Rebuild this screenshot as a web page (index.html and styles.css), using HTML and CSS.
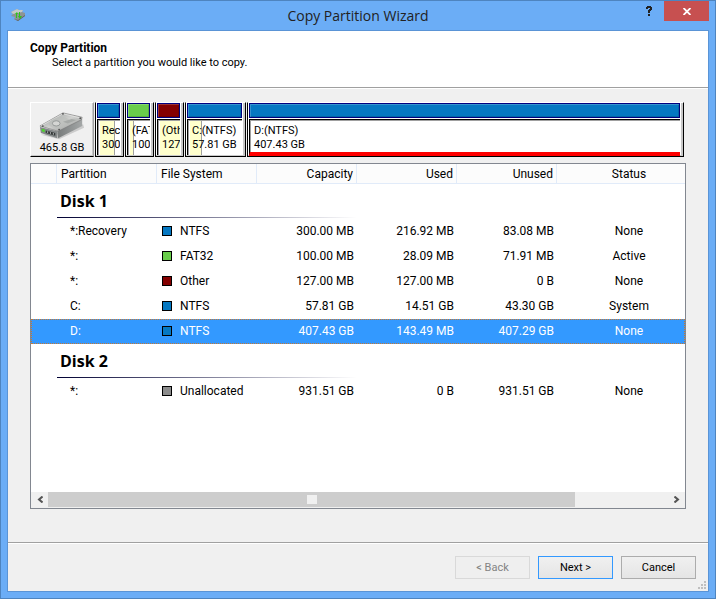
FILE: index.html
```html
<!DOCTYPE html>
<html lang="en">
<head>
    <meta charset="UTF-8">
    <meta name="viewport" content="width=device-width, initial-scale=1.0">
    <title>Copy Partition Wizard</title>
    <link rel="stylesheet" href="styles.css">
</head>
<body>
    <div class="window">
        <div class="titlebar">
            <svg class="app-icon" width="16" height="14" viewBox="0 0 16 14">
                <path d="M1 4L5 2L7 1L9 2L13 2L12 4L15 5L15 8L12 10L8 13L4 11L5 9L1 8L3 6Z" fill="#8d9494"/>
                <path d="M1 4L5 2L7 1L9 2L13 2L12 4L8 5L3 6Z" fill="#c3cac9"/>
                <path d="M4 11L8 12L15 7V8L8 13Z" fill="#5d6467"/>
                <path d="M5 6L7 4L8 6H7V10H6V6ZM9 4H10V8H12L10 11L8 8H9Z" fill="#2fc41c"/>
            </svg>
            <h1>Copy Partition Wizard</h1>
            <div class="title-buttons">
                <button class="help" aria-label="Help">
                    <svg width="7" height="10" viewBox="0 0 7 10" shape-rendering="crispEdges">
                        <path d="M1 0H5V1H6V4H5V5H4V7H2V4H3V3H4V2H2V3H0V1H1ZM2 8H4V10H2Z" fill="#222"/>
                    </svg>
                </button>
                <button class="close" aria-label="Close">
                    <svg width="8" height="7" viewBox="0 0 8 7">
                        <path d="M0.5 0L7.5 7M7.5 0L0.5 7" stroke="#fff" stroke-width="1.8"/>
                    </svg>
                </button>
            </div>
        </div>

        <div class="client">
            <header class="page-header">
                <h2>Copy Partition</h2>
                <p>Select a partition you would like to copy.</p>
            </header>

            <main>
                <div class="disk-map">
                    <div class="disk">
                        <svg width="48" height="28" viewBox="0 0 50 32" preserveAspectRatio="none">
                            <defs>
                                <linearGradient id="metal" x1="0" y1="0" x2="1" y2="1">
                                    <stop offset="0" stop-color="#909493"/>
                                    <stop offset="0.5" stop-color="#cfd0ce"/>
                                    <stop offset="1" stop-color="#858988"/>
                                </linearGradient>
                                <linearGradient id="side" x1="0" y1="0" x2="1" y2="0">
                                    <stop offset="0" stop-color="#777b7b"/>
                                    <stop offset="1" stop-color="#a4a7a7"/>
                                </linearGradient>
                            </defs>
                            <path d="M3 26L22 31L48 18L47 14L20 24Z" fill="#000" opacity="0.15"/>
                            <path d="M2 17L20 22V30L3 24Z" fill="#85898a"/>
                            <path d="M20 22L46 7V16L21 30Z" fill="url(#side)"/>
                            <path d="M2 16L26 1L46 6L45 9L21 22Z" fill="url(#metal)" stroke="#777" stroke-width="0.7"/>
                            <path d="M3 16L26 2L45 7" fill="none" stroke="#e8e8e6" stroke-width="0.8"/>
                            <ellipse cx="22" cy="12" rx="11" ry="6" fill="#bbbdbb" opacity="0.7" transform="rotate(-12 22 12)"/>
                            <ellipse cx="19" cy="13" rx="4" ry="3" fill="#d5d6d4" stroke="#8b8f8e" stroke-width="0.9"/>
                            <path d="M26 11L35 8L40 9L31 13Z" fill="#a7aaa8"/>
                            <circle cx="5" cy="16" r="1" fill="#555"/>
                            <circle cx="26" cy="2" r="1" fill="#555"/>
                            <circle cx="44" cy="7" r="1" fill="#555"/>
                            <circle cx="22" cy="20" r="1" fill="#555"/>
                            <path d="M4 19L7 20V23L4 22Z" fill="#4bd42b"/>
                            <path d="M8 21L18 24V27L8 24Z" fill="#353939"/>
                            <path d="M10 22V24M13 23V25M16 24V26" stroke="#b4b7b7"/>
                        </svg>
                        <span>465.8 GB</span>
                    </div>
                    <div class="part">
                        <div class="bar ntfs"></div>
                        <div class="part-body">
                            <div class="used" style="width: 72%"></div>
                            <p>Recovery<br>300.00 MB</p>
                        </div>
                    </div>
                    <div class="part">
                        <div class="bar fat32"></div>
                        <div class="part-body">
                            <div class="used" style="width: 18%"></div>
                            <p>(FAT32)<br>100.00 MB</p>
                        </div>
                    </div>
                    <div class="part">
                        <div class="bar other"></div>
                        <div class="part-body">
                            <div class="used" style="width: 100%"></div>
                            <p>(Other)<br>127.00 MB</p>
                        </div>
                    </div>
                    <div class="part medium">
                        <div class="bar ntfs"></div>
                        <div class="part-body">
                            <div class="used" style="width: 22%"></div>
                            <p>C:(NTFS)<br>57.81 GB</p>
                        </div>
                    </div>
                    <div class="part large selected">
                        <div class="bar ntfs"></div>
                        <div class="part-body">
                            <p>D:(NTFS)<br>407.43 GB</p>
                        </div>
                    </div>
                </div>

                <div class="list">
                    <table>
                        <colgroup>
                            <col class="col-tree">
                            <col class="col-data">
                            <col class="col-data">
                            <col class="col-data">
                            <col class="col-data">
                            <col class="col-data">
                            <col>
                        </colgroup>
                        <thead>
                            <tr>
                                <th></th>
                                <th>Partition</th>
                                <th>File System</th>
                                <th class="num">Capacity</th>
                                <th class="num">Used</th>
                                <th class="num">Unused</th>
                                <th class="status">Status</th>
                            </tr>
                        </thead>
                        <tbody>
                            <tr class="group"><td></td><th colspan="6">Disk 1</th></tr>
                            <tr>
                                <td></td>
                                <td>*:Recovery</td>
                                <td><i class="swatch ntfs"></i>NTFS</td>
                                <td class="num">300.00 MB</td>
                                <td class="num">216.92 MB</td>
                                <td class="num">83.08 MB</td>
                                <td class="status">None</td>
                            </tr>
                            <tr>
                                <td></td>
                                <td>*:</td>
                                <td><i class="swatch fat32"></i>FAT32</td>
                                <td class="num">100.00 MB</td>
                                <td class="num">28.09 MB</td>
                                <td class="num">71.91 MB</td>
                                <td class="status">Active</td>
                            </tr>
                            <tr>
                                <td></td>
                                <td>*:</td>
                                <td><i class="swatch other"></i>Other</td>
                                <td class="num">127.00 MB</td>
                                <td class="num">127.00 MB</td>
                                <td class="num">0 B</td>
                                <td class="status">None</td>
                            </tr>
                            <tr>
                                <td></td>
                                <td>C:</td>
                                <td><i class="swatch ntfs"></i>NTFS</td>
                                <td class="num">57.81 GB</td>
                                <td class="num">14.51 GB</td>
                                <td class="num">43.30 GB</td>
                                <td class="status">System</td>
                            </tr>
                            <tr class="selected">
                                <td></td>
                                <td>D:</td>
                                <td><i class="swatch ntfs"></i>NTFS</td>
                                <td class="num">407.43 GB</td>
                                <td class="num">143.49 MB</td>
                                <td class="num">407.29 GB</td>
                                <td class="status">None</td>
                            </tr>
                        </tbody>
                        <tbody>
                            <tr class="group"><td></td><th colspan="6">Disk 2</th></tr>
                            <tr>
                                <td></td>
                                <td>*:</td>
                                <td><i class="swatch unallocated"></i>Unallocated</td>
                                <td class="num">931.51 GB</td>
                                <td class="num">0 B</td>
                                <td class="num">931.51 GB</td>
                                <td class="status">None</td>
                            </tr>
                        </tbody>
                    </table>
                    <div class="scrollbar">
                        <button aria-label="Scroll left">
                            <svg width="6" height="7" viewBox="0 0 6 7"><path d="M5.5 0.5L2 3.5L5.5 6.5" fill="none" stroke="#555" stroke-width="2"/></svg>
                        </button>
                        <div class="track">
                            <div class="thumb"><span></span></div>
                        </div>
                        <button aria-label="Scroll right">
                            <svg width="6" height="7" viewBox="0 0 6 7"><path d="M0.5 0.5L4 3.5L0.5 6.5" fill="none" stroke="#555" stroke-width="2"/></svg>
                        </button>
                    </div>
                </div>
            </main>

            <footer>
                <button class="btn" disabled>&lt; Back</button>
                <button class="btn default">Next &gt;</button>
                <button class="btn">Cancel</button>
                <svg class="grip" width="8" height="8" viewBox="0 0 8 8" shape-rendering="crispEdges">
                    <path d="M6 0H8V2H6ZM3 3H5V5H3ZM6 3H8V5H6ZM0 6H2V8H0ZM3 6H5V8H3ZM6 6H8V8H6Z" fill="#bfbfbf"/>
                </svg>
            </footer>
        </div>
    </div>
</body>
</html>
```

FILE: styles.css
```css
* {
    box-sizing: border-box;
}
body {
    margin: 0;
    font-family: Roboto, "Open Sans", sans-serif;
    font-size: 11px;
    line-height: 14px;
    color: #000;
}
h1, h2, p {
    margin: 0;
}
button {
    font: inherit;
    color: inherit;
    padding: 0;
    border: none;
    background: none;
}
svg {
    display: block;
}
.window {
    display: flex;
    flex-direction: column;
    height: 100vh;
    padding: 0 6px 6px;
    border: 1px solid #4e84bf;
    background-color: #6badf6;
}

/* title bar */
.titlebar {
    display: grid;
    grid-template-columns: 1fr auto 1fr;
    height: 29px;
    flex-shrink: 0;
}
.app-icon {
    margin: 7px 0 0 3px;
}
.titlebar h1 {
    font-family: "Open Sans", sans-serif;
    font-size: 14px;
    font-weight: normal;
    line-height: 29px;
    color: #222;
}
.title-buttons {
    display: flex;
    justify-content: flex-end;
    align-items: flex-start;
}
.help {
    padding: 5px 11px;
}
.close {
    display: flex;
    align-items: center;
    justify-content: center;
    width: 45px;
    height: 20px;
    background-color: #c75050;
}

/* wizard page */
.client {
    display: flex;
    flex-direction: column;
    flex: 1;
    min-height: 0;
    border: 1px solid #5a94d6;
    background-color: #f0f0f0;
}
.page-header {
    height: 57px;
    padding: 10px 22px;
    background-color: #fff;
    border-bottom: 1px solid #a0a0a0;
    box-shadow: 0 1px #fff;
}
.page-header h2 {
    font-size: 12px;
    line-height: 15px;
}
.page-header p {
    padding-left: 22px;
}
main {
    display: flex;
    flex-direction: column;
    flex: 1;
    gap: 6px;
    min-height: 0;
    padding: 14px 22px 33px;
}

/* disk map */
.disk-map {
    display: flex;
    gap: 1px;
    height: 55px;
    margin-right: 2px;
}
.disk {
    display: flex;
    flex-direction: column;
    align-items: center;
    justify-content: flex-end;
    width: 64px;
    border: 1px solid #fff;
    border-right-color: #a0a0a0;
    border-bottom-color: #000;
    box-shadow: inset -1px -1px #c8c8c8;
}
.disk span {
    line-height: 16px;
}
.part {
    display: flex;
    flex-direction: column;
    width: 29px;
    padding: 0 3px 0 1px;
    border: 1px solid #000;
    border-top-color: #fff;
    background-color: #fff;
    box-shadow: inset -2px -1px #c8c8c8;
}
.medium {
    width: 61px;
}
.large {
    flex: 1;
}
.bar {
    height: 15px;
    border: 1px solid #000080;
    box-shadow: inset 1px 1px rgba(255, 255, 255, 0.2), inset -1px -1px rgba(0, 0, 0, 0.15);
}
.part-body {
    display: grid;
    flex: 1;
    margin: 1px 0;
    padding-left: 1px;
    overflow: hidden;
    border: solid #000;
    border-width: 1px 0 0 1px;
    box-shadow: inset 1px 1px #a0a0a0;
}
.used, .part-body p {
    grid-area: 1 / 1;
}
.used {
    margin: 1px 0 0 1px;
    border-right: 1px solid #a0a0a0;
    background-color: #ffffcc;
}
.part-body p {
    padding: 4px 0 0 3px;
    overflow: hidden;
    white-space: nowrap;
}
.part.selected .part-body {
    margin-bottom: 0;
    border-bottom: 4px solid #f00;
}
.ntfs {
    background-color: #0578c2;
}
.fat32 {
    background-color: #69cd4b;
}
.other {
    background-color: #840000;
}
.unallocated {
    background-color: #8c8c8c;
}

/* partition list */
.list {
    display: flex;
    flex-direction: column;
    justify-content: space-between;
    flex: 1;
    min-height: 0;
    border: 1px solid #828790;
    background-color: #fff;
}
table {
    width: 100%;
    table-layout: fixed;
    border-collapse: separate;
    border-spacing: 0;
    font-size: 12px;
    line-height: 16px;
}
.col-tree {
    width: 26px;
}
.col-data {
    width: 100px;
}
th, td {
    padding: 0;
    font-weight: normal;
    text-align: left;
    white-space: nowrap;
}
thead th {
    height: 20px;
    padding: 0 3px 0 4px;
    border-right: 1px solid #e1ebf9;
    border-bottom: 1px solid #e1ebf9;
    background-color: #fcfcfc;
}
thead th:last-child {
    border-right: none;
}
td {
    height: 25px;
    padding: 0 3px 1px 13px;
}
td:nth-child(3) {
    padding-left: 5px;
}
td:first-child {
    padding: 0;
}
.num {
    text-align: right;
}
th.status, td.status {
    padding-left: 16px;
    padding-right: 0;
    text-align: center;
}
.group th {
    height: 35px;
    padding: 0 3px 2px;
    font-family: "Open Sans", sans-serif;
    font-size: 16px;
    font-weight: bold;
    background: linear-gradient(to right, #000033, #fff) no-repeat 0 33px / 300px 1px;
}
.swatch {
    display: inline-block;
    width: 10px;
    height: 10px;
    margin-right: 8px;
    border: 1px solid #000;
    vertical-align: -1px;
}
tr.selected {
    color: #fff;
    background-color: #3399ff;
    outline: 1px dotted #c87830;
    outline-offset: -1px;
}

/* scroll bar */
.scrollbar {
    display: flex;
    height: 16px;
    padding-bottom: 1px;
    background-color: #f0f0f0;
}
.scrollbar button {
    display: flex;
    align-items: center;
    justify-content: center;
    width: 17px;
}
.track {
    flex: 1;
}
.thumb {
    display: flex;
    align-items: center;
    justify-content: center;
    width: 85%;
    height: 100%;
    background-color: #cdcdcd;
}
.thumb span {
    width: 10px;
    height: 9px;
    background-color: #f0f0f0;
}

/* buttons */
footer {
    position: relative;
    display: flex;
    justify-content: flex-end;
    gap: 8px;
    height: 49px;
    flex-shrink: 0;
    padding: 13px 12px 0;
    border-top: 1px solid #a0a0a0;
    box-shadow: inset 0 1px #fff;
}
.btn {
    width: 75px;
    height: 23px;
    border: 1px solid #acacac;
    background-image: linear-gradient(#f0f0f0, #e5e5e5);
}
.btn.default {
    border-color: #3399ff;
}
.btn:disabled {
    color: #838383;
    border-color: #d9d9d9;
    background: #efefef;
}
.grip {
    position: absolute;
    right: 2px;
    bottom: 2px;
}
```
